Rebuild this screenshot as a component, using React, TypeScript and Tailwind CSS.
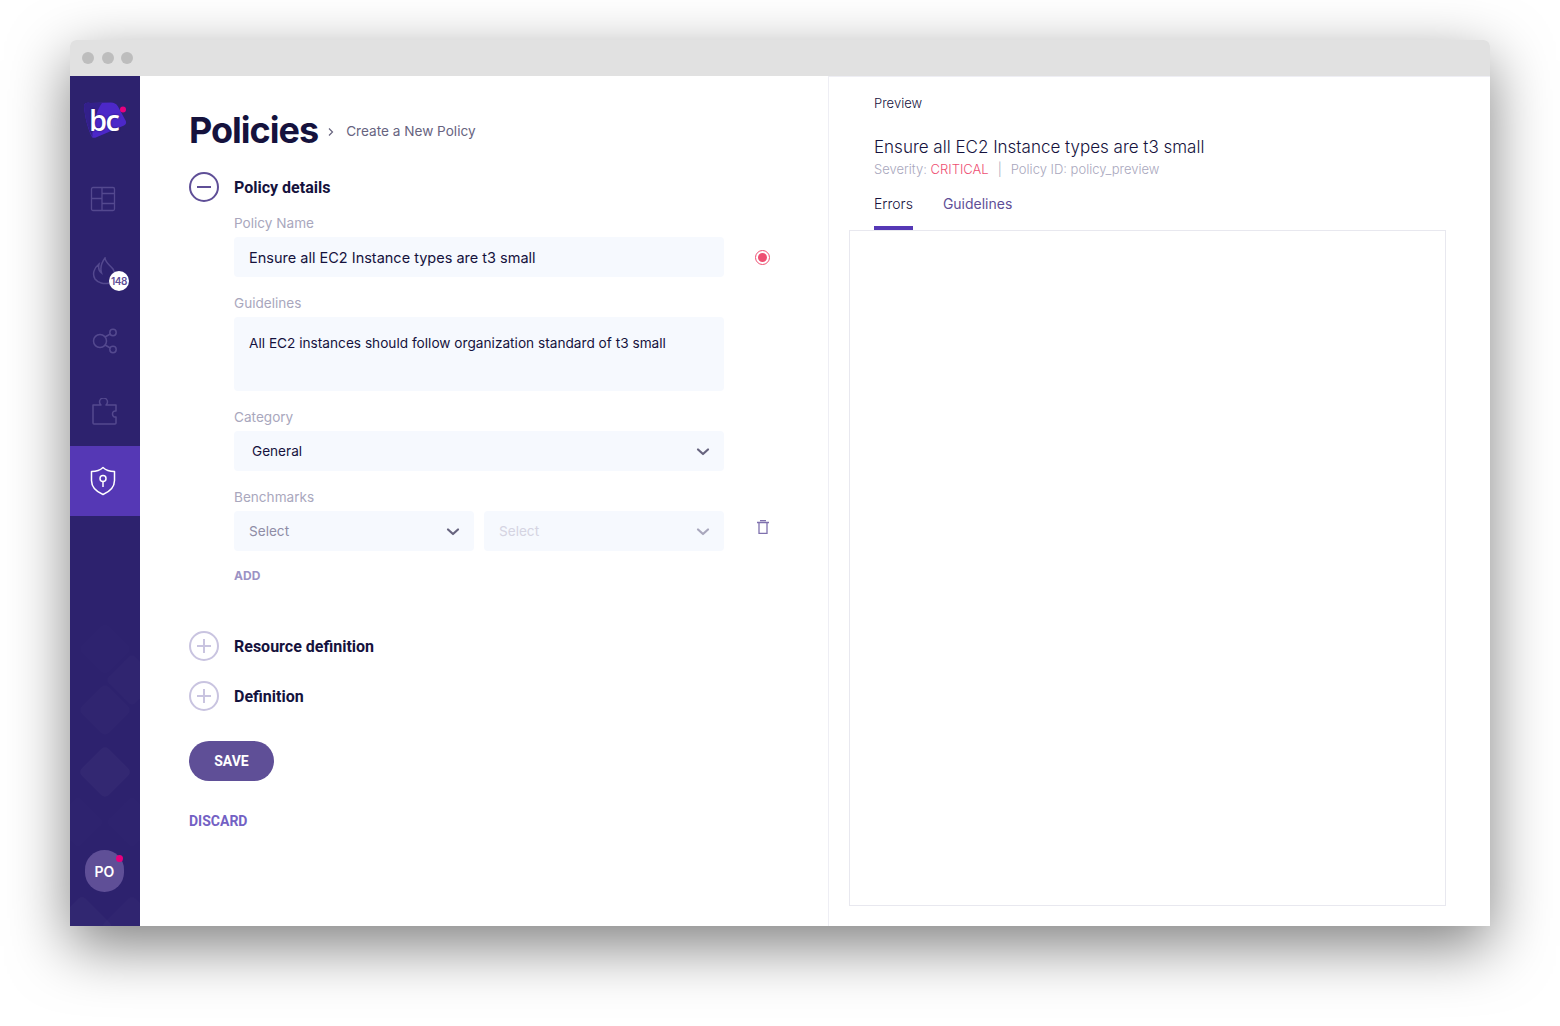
import type { ReactNode } from 'react';

const INTER = { fontFamily: 'Inter, sans-serif' };

function Chevron({ className }: { className: string }) {
  return (
    <svg width="14" height="10" viewBox="0 0 14 10" fill="none" className={`translate-y-px ${className}`}>
      <path d="M2 2.500 7 7l5-4.500" stroke="currentColor" strokeWidth="2.200" strokeLinecap="round" strokeLinejoin="round" />
    </svg>
  );
}

function Field({ label, children }: { label: string; children: ReactNode }) {
  return (
    <div>
      <div className="h-[14px] pt-[2px] flex items-center text-[13.6px] leading-none text-[#a9a7bd]">{label}</div>
      <div className="mt-[7px]">{children}</div>
    </div>
  );
}

function Select({ value, muted, className }: { value: string; muted?: boolean; className: string }) {
  return (
    <div className={`h-10 rounded-[4px] bg-[#f6f9fe] flex items-center justify-between pr-[14px] text-[13.6px] ${className}`}>
      <span className={muted ? 'text-[#d5d4e2]' : value === 'General' ? 'text-[#15123d]' : 'text-[#8f8da6]'}>{value}</span>
      <Chevron className={muted ? 'text-[#a9a7bd]' : 'text-[#67647f]'} />
    </div>
  );
}

function SectionHead({ title, open }: { title: string; open?: boolean }) {
  const ring = open ? 'border-[#5f4f97]' : 'border-[#c9c4e0]';
  const bar = open ? 'bg-[#5f4f97]' : 'bg-[#c9c4e0]';
  return (
    <div className="flex items-center h-[30px]">
      <div className={`relative w-[30px] h-[30px] rounded-full border-2 ${ring}`}>
        <div className={`absolute left-[6px] top-[12px] w-[14px] h-[2px] ${bar}`} />
        {!open && <div className={`absolute left-[12px] top-[6px] w-[2px] h-[14px] ${bar}`} />}
      </div>
      <div className="ml-[15px] pt-[2px] text-[16px] font-bold text-[#15123d]" style={{ fontFamily: 'Roboto, sans-serif' }}>
        {title}
      </div>
    </div>
  );
}

function Sidebar() {
  return (
    <aside className="relative w-[70px] shrink-0 bg-[#2d226e] overflow-hidden flex flex-col">
      {/* background diamonds */}
      <svg className="absolute left-0 bottom-0" width="70" height="326" viewBox="0 0 70 326" fill="none">
        <g fill="#ffffff">
          <rect x="-19" y="-19" width="38" height="38" rx="5" transform="translate(35 49) rotate(45)" opacity="0.008" />
          <rect x="-19" y="-19" width="38" height="38" rx="5" transform="translate(62 80) rotate(45)" opacity="0.016" />
          <rect x="-19" y="-19" width="38" height="38" rx="5" transform="translate(35 110) rotate(45)" opacity="0.014" />
          <rect x="-19" y="-19" width="38" height="38" rx="5" transform="translate(35 172) rotate(45)" opacity="0.03" />
          <rect x="-19" y="-19" width="38" height="38" rx="5" transform="translate(62 222) rotate(45)" opacity="0.008" />
          <rect x="-19" y="-19" width="38" height="38" rx="5" transform="translate(8 222) rotate(45)" opacity="0.008" />
          <rect x="-22" y="-22" width="44" height="44" rx="5" transform="translate(12 326) rotate(45)" opacity="0.025" />
          <rect x="-22" y="-22" width="44" height="44" rx="5" transform="translate(62 326) rotate(45)" opacity="0.016" />
        </g>
      </svg>

      {/* logo */}
      <div className="relative h-[86px] shrink-0">
        <svg className="absolute left-[13px] top-[25px]" width="46" height="40" viewBox="0 0 46 40" fill="none">
          <path d="M1 5c0-3 3-4 6-3l21-.5c3 0 5 1 7 4l7 13c2 3 1 5-1 6L14 36c-3 1.500-5 1-5.500-1C5 28 2 17 1 5Z" fill="#4c28c8" />
          <path d="M1 5c0-3 3-4 6-3l12 0C13 10 9 26 9.500 36 5 28 2 17 1 5Z" fill="#33208a" />
          <circle cx="40" cy="8.500" r="3" fill="#e6007e" />
        </svg>
        <div
          className="absolute left-[19px] top-[26px] text-[29px] leading-[36px] font-semibold text-white tracking-[-1.500px] [text-shadow:0_0_2px_#1c1060]"
          style={{ fontFamily: '"Open Sans", sans-serif' }}
        >
          bc
        </div>
      </div>

      <div className="h-[71px] flex items-center justify-center">
        <svg width="26" height="26" viewBox="0 0 26 26" fill="none" stroke="#54498f" strokeWidth="1.300" className="ml-[-4px] mt-[3px]">
          <rect x="1.500" y="1.500" width="23" height="23" rx="1.500" />
          <path d="M12 1.500v23M1.500 12.500H12M12 7.500h12.500M12 17.500h12.500" />
        </svg>
      </div>

      <div className="relative h-[71px] flex items-center justify-center">
        <svg width="25" height="28" viewBox="0 0 25 28" fill="none" stroke="#54498f" strokeWidth="1.500" className="ml-[-1px] mt-[5px]">
          <path d="M13 1c.5 5 5 7 8 11 3 5 1 11-4 14-5 1.500-11 0-14-4-3-5-1-11 4-15-1 4 0 7 2.500 9C8 11 10 5 13 1Z" />
        </svg>
        <div
          className="absolute left-[39px] top-[38px] w-5 h-5 rounded-full bg-white flex items-center justify-center text-[10px] font-semibold text-[#5f4f97] tracking-[-0.5px]"
          style={INTER}
        >
          148
        </div>
      </div>

      <div className="h-[71px] flex items-center justify-center">
        <svg width="26" height="26" viewBox="0 0 26 26" fill="none" stroke="#54498f" strokeWidth="1.500" className="ml-[-1px] mt-[3px]">
          <circle cx="8" cy="13" r="6.500" />
          <circle cx="21" cy="4.500" r="3.200" />
          <circle cx="21" cy="21.500" r="3.200" />
          <path d="m13 9 5.300-3M13 17l5.300 3" />
        </svg>
      </div>

      <div className="h-[71px] flex items-center justify-center">
        <svg width="26" height="28" viewBox="0 0 26 28" fill="none" stroke="#54498f" strokeWidth="1.500" strokeLinejoin="round" className="ml-[-1px] mt-[3px]">
          <path d="M1 7h8c-1-1-1.500-2-1.500-3a4 4 0 0 1 8 0c0 1-.5 2-1.500 3h10v6c-2-.5-3.500 1-3.500 3s1.500 3.500 3.500 3v6a1 1 0 0 1-1 1H2a1 1 0 0 1-1-1Z" />
        </svg>
      </div>

      <div className="h-[70px] bg-[#5538b5] flex items-center justify-center">
        <svg width="26" height="30" viewBox="0 0 26 30" fill="none" stroke="#ffffff" strokeWidth="1.500" className="ml-[-5px]">
          <path d="M13 1.500c2.500 2.500 6 4 11.500 4v9c0 6.500-4.500 11-11.500 14C6 25.500 1.500 21 1.500 14.500v-9C7 5.500 10.500 4 13 1.500Z" strokeLinejoin="round" />
          <circle cx="13" cy="12.500" r="3" />
          <path d="M13 15.500v5.500" />
        </svg>
      </div>

      <div className="flex-1" />

      <div className="relative mb-[34px] ml-[15px] w-[39px] h-[42px] rounded-full bg-[#5f4f97] flex items-center justify-center">
        <span className="text-[14px] font-semibold text-white" style={INTER}>
          PO
        </span>
        <div className="absolute right-[1px] top-[5px] w-[7px] h-[7px] rounded-full bg-[#e6007e]" />
      </div>
    </aside>
  );
}

function PolicyForm() {
  return (
    <main className="w-[689px] shrink-0 border-r border-[#eeeef4] pl-[49px] pt-[30px]" style={INTER}>
      <div className="flex items-center h-[48px]">
        <h1 className="text-[36px] leading-[48px] font-bold text-[#15123d] tracking-[-1px]">Policies</h1>
        <svg width="8" height="10" viewBox="0 0 8 10" fill="none" className="ml-[9px] mt-[4px]">
          <path d="M2 1.500 5.500 5 2 8.500" stroke="#67647f" strokeWidth="1.200" />
        </svg>
        <span className="ml-[11px] pt-[2px] text-[13.6px] text-[#67647f]">Create a New Policy</span>
      </div>

      <div className="mt-[18px]">
        <SectionHead title="Policy details" open />
      </div>

      <div className="relative mt-[14px] ml-[45px] w-[490px] flex flex-col gap-[19px]">
        <Field label="Policy Name">
          <div className="h-10 rounded-[4px] bg-[#f6f9fe] flex items-center pl-[15px] pt-[2px] text-[14.5px] text-[#15123d]">
            Ensure all EC2 Instance types are t3 small
          </div>
          {/* required marker */}
          <div className="absolute left-[521px] top-[34px] w-[15px] h-[15px] rounded-full border border-[#ee4f72] flex items-center justify-center">
            <div className="w-[9px] h-[9px] rounded-full bg-[#ee4f72]" />
          </div>
        </Field>

        <Field label="Guidelines">
          <div className="h-[74px] rounded-[4px] bg-[#f6f9fe] pl-[15px] pt-[18px] text-[13.67px] leading-[17px] text-[#15123d]">
            All EC2 instances should follow organization standard of t3 small
          </div>
        </Field>

        <Field label="Category">
          <Select value="General" className="pl-[18px]" />
        </Field>

        <Field label="Benchmarks">
          <div className="flex gap-[10px]">
            <Select value="Select" className="w-[240px] pl-[15px]" />
            <Select value="Select" muted className="w-[240px] pl-[15px]" />
          </div>
          <svg className="absolute left-[522px] top-[304px]" width="14" height="15" viewBox="0 0 14 15" fill="none" stroke="#7f71ae" strokeWidth="1.300">
            <path d="M1 2.500h12M4 .7h6M3 2.500v10.800h8V2.500" />
          </svg>
        </Field>
      </div>

      <div className="ml-[45px] mt-[18px] h-[14px] flex items-center text-[12px] font-bold text-[#9c92c4]">ADD</div>

      <div className="mt-[48px] flex flex-col gap-[20px]">
        <SectionHead title="Resource definition" />
        <SectionHead title="Definition" />
      </div>

      <button className="mt-[30px] w-[85px] h-10 rounded-full bg-[#5f4f97] text-white text-[14px] font-bold" style={{ fontFamily: 'Roboto, sans-serif' }}>
        SAVE
      </button>

      <div className="mt-[32px] text-[14px] leading-[16px] font-bold text-[#7361c4]" style={{ fontFamily: 'Roboto, sans-serif' }}>
        DISCARD
      </div>
    </main>
  );
}

function PreviewPane() {
  return (
    <section className="flex-1 min-w-0 flex flex-col pb-[20px] pl-[20px] pr-[44px] border-t border-[#eeeef4]" style={INTER}>
      <div className="pl-[25px]">
        <div className="pt-[18px] h-[18px] box-content flex items-center text-[13px] font-light text-[#15123d]">Preview</div>
        <div className="mt-[24px] h-[22px] flex items-center text-[17px] font-light text-[#15123d]">Ensure all EC2 Instance types are t3 small</div>
        <div className="mt-[2px] h-[18px] flex items-center text-[13px] font-light text-[#a9a7bd]">
          Severity:&nbsp;<span className="text-[#ee4f72]">CRITICAL</span>
          <span className="mx-[9px]">|</span>Policy ID: policy_preview
        </div>
        <div className="mt-[14px] flex gap-[30px] text-[14px] font-light">
          <div className="h-[37px] flex flex-col justify-between">
            <span className="mt-[1px] leading-[20px] text-[#15123d]">Errors</span>
            <div className="h-1 bg-[#5538b5]" />
          </div>
          <span className="mt-[1px] leading-[20px] text-[#5f4f97] font-normal">Guidelines</span>
        </div>
      </div>
      <div className="flex-1 border border-[#e8e8ef]" />
    </section>
  );
}

export default function App() {
  return (
    <div className="w-[1560px] h-[1026px] bg-white pt-[40px] pl-[70px] overflow-hidden">
      <div className="w-[1420px] h-[886px] flex flex-col shadow-[0_20px_60px_rgba(0,0,0,0.5)] rounded-t-[6px]">
        <div className="h-[36px] shrink-0 bg-[#e1e1e1] rounded-t-[6px] flex items-center gap-[7.5px] pl-[12px]">
          <div className="w-3 h-3 rounded-full bg-[#bdbdbd]" />
          <div className="w-3 h-3 rounded-full bg-[#bdbdbd]" />
          <div className="w-3 h-3 rounded-full bg-[#bdbdbd]" />
        </div>
        <div className="flex-1 min-h-0 flex bg-white">
          <Sidebar />
          <PolicyForm />
          <PreviewPane />
        </div>
      </div>
    </div>
  );
}
